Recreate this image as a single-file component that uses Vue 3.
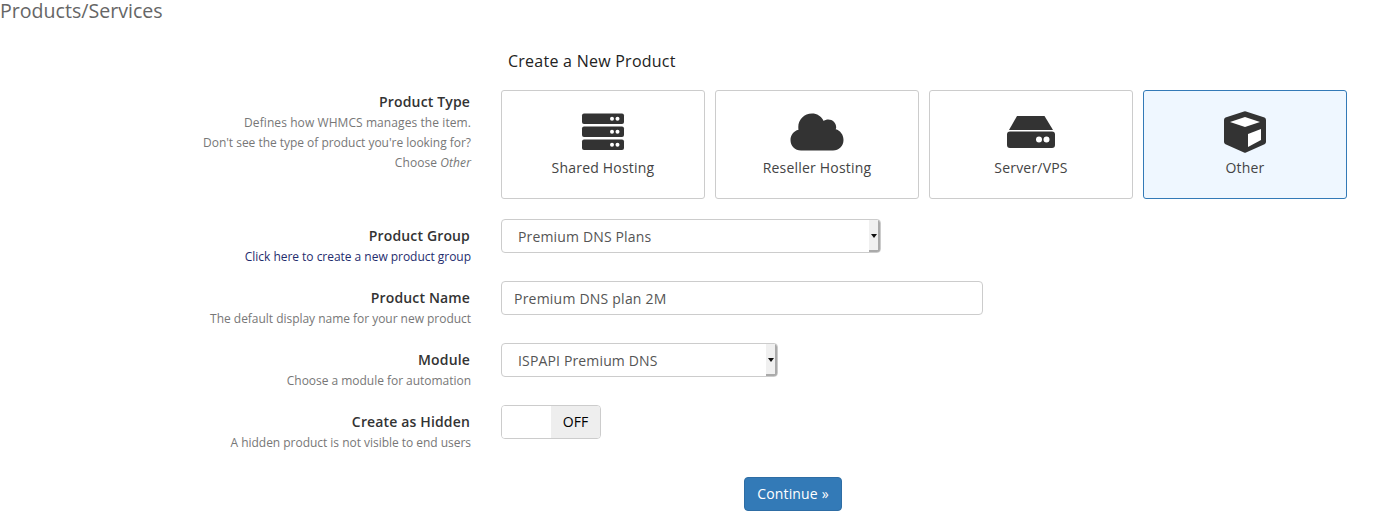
<script setup>
const types = [
  { name: 'Shared Hosting', icon: 'server' },
  { name: 'Reseller Hosting', icon: 'cloud' },
  { name: 'Server/VPS', icon: 'hdd' },
  { name: 'Other', icon: 'cube', active: true },
]
</script>

<template>
  <div class="page">
    <h1 class="title">Products/Services</h1>
    <h2 class="subtitle">Create a New Product</h2>

    <div class="row row-type">
      <div class="label">
        <div class="name">Product Type</div>
        <div class="help wide">Defines how WHMCS manages the item.</div>
        <div class="help">Don't see the type of product you're looking for?</div>
        <div class="help wide">Choose <em>Other</em></div>
      </div>
      <div class="cards">
        <div v-for="t in types" :key="t.name" class="card" :class="{ active: t.active }">
          <svg v-if="t.icon === 'server'" class="icon" width="44" height="38" viewBox="0 0 44 38">
            <rect x="1" y="0.5" width="42" height="10.5" rx="2" fill="#333" />
            <rect x="1" y="13.500" width="42" height="10.5" rx="2" fill="#333" />
            <rect x="1" y="26.500" width="42" height="10.5" rx="2" fill="#333" />
            <g fill="#fff">
              <circle cx="31" cy="5.8" r="2" /><circle cx="36.500" cy="5.8" r="2" />
              <circle cx="31" cy="18.800" r="2" /><circle cx="36.500" cy="18.800" r="2" />
              <circle cx="31" cy="31.800" r="2" /><circle cx="36.500" cy="31.800" r="2" />
            </g>
          </svg>
          <svg v-else-if="t.icon === 'cloud'" class="icon cloud" width="54" height="38" viewBox="0 0 54 38">
            <path fill="#333" d="M11 37.500C5 37.500 .5 33 .5 27c0-5 3.200-9 8-10.300-.2-1-.2-1.700-.2-2.700C8.300 6.500 14.300.5 22 .5c5 0 9.300 2.500 11.700 7.500 1.300-1 2.800-1.500 4.500-1.500 4.500 0 8 3.500 8 8 0 .5-.2 1-.5 1.800 4.600 1.300 7.800 5.500 7.800 10.700 0 5.900-4.600 10.500-10.500 10.500z" />
          </svg>
          <svg v-else-if="t.icon === 'hdd'" class="icon" width="48" height="38" viewBox="0 0 48 38">
            <path fill="#333" d="M10 3h27.500L46 17H2z" />
            <path fill="#333" fill-rule="evenodd" d="M3 18.500h42a3 3 0 0 1 3 3V32a3 3 0 0 1-3 3H3a3 3 0 0 1-3-3V21.500a3 3 0 0 1 3-3zM32 23.500a3 3 0 1 0 0 6 3 3 0 0 0 0-6zm7.500 0a3 3 0 1 0 0 6 3 3 0 0 0 0-6z" />
          </svg>
          <svg v-else class="icon cube" width="44" height="42" viewBox="0 0 44 42">
            <path fill="#333" d="M21 .4Q22 0 23 .4L41.500 6.500Q43 7.200 43 9V31Q43 32.500 41.500 33.200L23 41.600Q22 42 21 41.600L2.500 33.200Q1 32.500 1 31V9Q1 7.200 2.500 6.500z" />
            <path fill="#fff" d="M22 6 7 11 22 16l15-5z" />
            <path fill="#fff" d="M25 23 38 18V29L25 36z" />
          </svg>
          <span class="card-name">{{ t.name }}</span>
        </div>
      </div>
    </div>

    <div class="row">
      <div class="label pad">
        <div class="name">Product Group</div>
        <div class="help link">Click here to create a new product group</div>
      </div>
      <div class="select group">
        <span>Premium DNS Plans</span>
        <span class="arrow"></span>
      </div>
    </div>

    <div class="row">
      <div class="label pad">
        <div class="name">Product Name</div>
        <div class="help">The default display name for your new product</div>
      </div>
      <input class="input" value="Premium DNS plan 2M" />
    </div>

    <div class="row">
      <div class="label pad">
        <div class="name">Module</div>
        <div class="help">Choose a module for automation</div>
      </div>
      <div class="select module">
        <span>ISPAPI Premium DNS</span>
        <span class="arrow"></span>
      </div>
    </div>

    <div class="row">
      <div class="label pad">
        <div class="name">Create as Hidden</div>
        <div class="help">A hidden product is not visible to end users</div>
      </div>
      <div class="toggle">
        <span class="handle"></span>
        <span class="off">OFF</span>
      </div>
    </div>

    <div class="actions">
      <button class="btn">Continue »</button>
    </div>
  </div>
</template>

<style scoped>
.page {
  width: 1379px;
  height: 527px;
  overflow: hidden;
  background: #fff;
  font-family: "Open Sans", sans-serif;
  font-size: 14px;
  color: #333;
  box-sizing: border-box;
}
.title {
  margin: 0;
  font-size: 19.6px;
  font-weight: 400;
  line-height: 22px;
  color: #666;
  height: 22px;
}
.subtitle {
  margin: 28px 0 0 508px;
  font-size: 16px;
  font-weight: 400;
  line-height: 22px;
  height: 20px;
  color: #222;
  letter-spacing: 0.25px;
}
.row {
  display: flex;
  column-gap: 30px;
  height: 62px;
}
.row-type {
  margin-top: 20px;
  height: 129px;
}
.label {
  width: 471px;
  text-align: right;
  flex: none;
  padding-top: 2px;
}
.label.pad {
  padding-top: 7px;
}
.name {
  font-size: 14px;
  font-weight: 600;
  line-height: 20px;
  color: #333;
  padding-right: 1px;
  letter-spacing: 0.15px;
}
.help {
  font-size: 12px;
  line-height: 20px;
  color: #777;
  letter-spacing: -0.03px;
  position: relative;
  top: 1px;
}
.help.wide {
  letter-spacing: 0.08px;
}
.link {
  color: #1f2d6e;
}
.cards {
  display: flex;
  gap: 10px;
}
.card {
  width: 204px;
  height: 109px;
  box-sizing: border-box;
  border: 1px solid #ccc;
  border-radius: 3px;
  position: relative;
  background: #fff;
}
.card.active {
  background: #eff7ff;
  border-color: #337ab7;
}
.icon {
  position: absolute;
  left: 50%;
  top: 22px;
  transform: translateX(-50%);
}
.icon.cloud {
  margin-left: -0.5px;
}
.icon.cube {
  top: 20px;
}
.card-name {
  position: absolute;
  left: 0;
  right: 0;
  top: 67px;
  text-align: center;
  font-size: 14px;
  line-height: 20px;
  color: #444;
  letter-spacing: 0.2px;
}
.select {
  height: 34px;
  box-sizing: border-box;
  border: 1px solid #ccc;
  border-radius: 4px;
  display: flex;
  align-items: center;
  padding-left: 16px;
  font-size: 14px;
  color: #555;
  position: relative;
  background: #fff;
  overflow: hidden;
  letter-spacing: 0.15px;
}
.select.group {
  width: 380px;
}
.select.module {
  width: 277px;
}
.arrow {
  position: absolute;
  right: 0;
  top: 0;
  bottom: 0;
  width: 11px;
  box-sizing: border-box;
  background: #f0f0f0;
  border-right: 2px solid #aaa;
  border-bottom: 2px solid #aaa;
}
.arrow::after {
  content: "";
  position: absolute;
  left: 2px;
  top: 14px;
  border-left: 3px solid transparent;
  border-right: 3px solid transparent;
  border-top: 4px solid #111;
}
.input {
  width: 482px;
  height: 34px;
  box-sizing: border-box;
  border: 1px solid #ccc;
  border-radius: 4px;
  padding: 0 12px;
  font: 14px "Open Sans", sans-serif;
  letter-spacing: 0.22px;
  color: #555;
  outline: none;
}
.toggle {
  width: 100px;
  height: 34px;
  box-sizing: border-box;
  border: 1px solid #ccc;
  border-radius: 4px;
  display: flex;
  overflow: hidden;
}
.handle {
  width: 49px;
  background: #fff;
}
.off {
  flex: 1;
  background: #eee;
  color: #000;
  font-size: 14px;
  line-height: 32px;
  text-align: center;
}
.actions {
  margin-top: 10px;
  padding-left: 744px;
}
.btn {
  width: 98px;
  height: 34px;
  padding: 0 0 2px;
  border: 1px solid #2e6da4;
  border-radius: 4px;
  background: #337ab7;
  color: #fff;
  font: 14px "Open Sans", sans-serif;
  letter-spacing: 0.15px;
}
</style>

<style>
html, body { margin: 0; background: #fff; }
</style>
